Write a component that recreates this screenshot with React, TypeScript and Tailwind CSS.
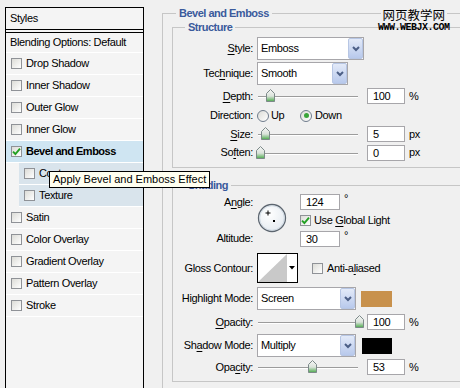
import React from "react";

const styleRows = [
  { name: "Drop Shadow" },
  { name: "Inner Shadow" },
  { name: "Outer Glow" },
  { name: "Inner Glow" },
  { name: "Bevel and Emboss", checked: true, active: true },
  { name: "Contour", sub: true },
  { name: "Texture", sub: true },
  { name: "Satin" },
  { name: "Color Overlay" },
  { name: "Gradient Overlay" },
  { name: "Pattern Overlay" },
  { name: "Stroke" },
];

function Check({ checked }: { checked?: boolean }) {
  return (
    <span className="w-[11px] h-[11px] shrink-0 border border-[#8f9297] bg-linear-to-br from-[#dcdcd7] to-white flex items-center justify-center">
      {checked && (
        <svg width="9" height="9" viewBox="0 0 9 9">
          <path d="M1 4.6 L3.4 7 L8 1.6" fill="none" stroke="#22a022" strokeWidth="1.9" />
        </svg>
      )}
    </span>
  );
}

function Radio({ on }: { on?: boolean }) {
  return (
    <span className="w-[12px] h-[12px] shrink-0 rounded-full border border-[#6f7c8c] bg-linear-to-br from-[#dcdcd7] to-white flex items-center justify-center">
      {on && <span className="w-[5px] h-[5px] rounded-full bg-[#3aa53a]" />}
    </span>
  );
}

function Select({ value, className }: { value: string; className: string }) {
  return (
    <div className={`h-[23px] shrink-0 border border-[#a7a6aa] bg-white flex items-center justify-between ${className}`}>
      <span className="pl-[3px]">{value}</span>
      <span className="w-[15px] h-[21px] border border-[#b7c6e4] rounded-[2px] bg-linear-to-b from-[#e3eaf8] to-[#b8c9ec] flex items-center justify-center">
        <svg width="8" height="6" viewBox="0 0 8 6">
          <path d="M1 1 L4 4 L7 1" fill="none" stroke="#4c5f86" strokeWidth="2" />
        </svg>
      </span>
    </div>
  );
}

function Field({ value, className = "w-[38px]" }: { value: string; className?: string }) {
  return (
    <div className={`h-[16px] shrink-0 border border-[#a7a6aa] bg-white pl-[5px] leading-[14px] ${className}`}>
      {value}
    </div>
  );
}

function Slider({ pos }: { pos: number }) {
  return (
    <div className="relative w-[100px] h-[14px] shrink-0 ml-[1px]">
      <div className="absolute left-0 right-0 top-[7px] h-[2px] border-t border-[#9c9c9c] border-b border-b-white" />
      <svg className="absolute top-0" style={{ left: pos - 4.5 }} width="9" height="13" viewBox="0 0 9 13">
        <defs>
          <linearGradient id="thumb" x1="0" y1="0" x2="0" y2="1">
            <stop offset="0" stopColor="#f6f6f6" />
            <stop offset="0.55" stopColor="#dbe3db" />
            <stop offset="1" stopColor="#4caa4c" />
          </linearGradient>
        </defs>
        <path d="M0.5 4.5 L4.5 0.5 L8.5 4.5 V12.5 H0.5 Z" fill="url(#thumb)" stroke="#7c8989" />
      </svg>
    </div>
  );
}

function Label({ children }: { children: React.ReactNode }) {
  return <div className="w-[80px] shrink-0 text-right mr-[4px]">{children}</div>;
}

const U = ({ children }: { children: React.ReactNode }) => <span className="underline underline-offset-2">{children}</span>;

export default function App() {
  return (
    <div className="relative w-[460px] h-[388px] overflow-hidden bg-[#f0f0f0] flex items-start text-[11px] leading-[13px] text-black tracking-[-0.35px] font-['Liberation_Sans',Arial,sans-serif]">
      {/* Styles list */}
      <div className="ml-[5px] mt-[7px] w-[139px] h-[400px] shrink-0 border border-black bg-[#f4f4f4]">
        <div className="h-[22px] border-b border-black flex items-center pl-[4px]">Styles</div>
        <div className="mt-[2px] h-[21px] border-t border-black border-b border-b-white flex items-center pl-[4px]">
          Blending Options: Default
        </div>
        {styleRows.map((r) => (
          <div
            key={r.name}
            className={`h-[22px] border-b border-white flex items-center gap-[4px] ${
              r.active ? "bg-[#cfe5f2] pl-[5px]" : r.sub ? "ml-[13px] bg-[#d9e4ec] pl-[5px]" : "pl-[5px]"
            } ${r.active ? "font-bold tracking-[-0.5px]" : ""}`}
          >
            <Check checked={r.checked} />
            <span>{r.name}</span>
          </div>
        ))}
      </div>

      {/* Bevel and Emboss */}
      <fieldset className="ml-[18px] mt-[6px] w-[312px] shrink-0 border border-[#c6c6c6] pb-[30px]">
        <legend className="ml-[13px] px-[3px] leading-[14px] font-bold text-[#3a5a9c] tracking-[-0.5px]">Bevel and Emboss</legend>

        <fieldset className="ml-[9px] w-[300px] border border-[#c6c6c6] pt-[2px] pb-[5px]">
          <legend className="ml-[12px] px-[3px] leading-[14px] font-bold text-[#3a5a9c] tracking-[-0.5px]">Structure</legend>
          <div className="flex items-center h-[25px]">
            <Label><U>S</U>tyle:</Label>
            <Select value="Emboss" className="w-[107px]" />
          </div>
          <div className="flex items-center h-[25px]">
            <Label>Tec<U>h</U>nique:</Label>
            <Select value="Smooth" className="w-[91px]" />
          </div>
          <div className="flex items-center h-[20px]">
            <Label><U>D</U>epth:</Label>
            <Slider pos={12} />
            <Field value="100" className="w-[38px] ml-[9px]" />
            <span className="ml-[4px]">%</span>
          </div>
          <div className="flex items-center h-[19px]">
            <Label>Direction:</Label>
            <div className="flex items-center w-[43px]">
              <Radio />
              <span className="ml-[2px]">Up</span>
            </div>
            <Radio on />
            <span className="ml-[3px]">Down</span>
          </div>
          <div className="flex items-center h-[18px]">
            <Label><U>S</U>ize:</Label>
            <Slider pos={7} />
            <Field value="5" className="w-[38px] ml-[9px]" />
            <span className="ml-[4px]">px</span>
          </div>
          <div className="flex items-center h-[19px]">
            <Label>So<U>f</U>ten:</Label>
            <Slider pos={2} />
            <Field value="0" className="w-[38px] ml-[9px]" />
            <span className="ml-[4px]">px</span>
          </div>
        </fieldset>

        <fieldset className="ml-[9px] mt-[10px] w-[300px] border border-[#c6c6c6] pb-[4px]">
          <legend className="ml-[12px] px-[3px] leading-[14px] font-bold text-[#3a5a9c] tracking-[-0.5px]">Shading</legend>
          <div className="flex h-[56px]">
            <div className="w-[80px] shrink-0 mr-[4px] flex flex-col justify-between text-right">
              <div className="h-[20px] leading-[20px]">A<U>n</U>gle:</div>
              <div className="h-[20px] leading-[20px]">Altitude:</div>
            </div>
            <svg className="mt-[11px] shrink-0" width="30" height="30" viewBox="0 0 30 30">
              <defs>
                <radialGradient id="dial" cx="0.4" cy="0.35" r="0.7">
                  <stop offset="0" stopColor="#ffffff" />
                  <stop offset="1" stopColor="#e4eaf0" />
                </radialGradient>
              </defs>
              <circle cx="15" cy="15" r="13.5" fill="url(#dial)" stroke="#5d6670" strokeWidth="1.3" />
              <circle cx="15" cy="15" r="12.3" fill="none" stroke="#c9d4de" strokeWidth="0.8" />
              <path d="M11 7.5 V12.5 M8.5 10 H13.5" stroke="#000" strokeWidth="1" />
              <rect x="16" y="17" width="2" height="2" fill="#000" />
            </svg>
            <div className="ml-[13px] flex flex-col">
              <div className="flex items-start mt-[2px]">
                <Field value="124" className="w-[40px] pl-[3px]" />
                <span className="ml-[4px] -mt-[2px]">°</span>
              </div>
              <div className="flex items-center mt-[4px] h-[12px]">
                <Check checked />
                <span className="ml-[3px]">Use <U>G</U>lobal Light</span>
              </div>
              <div className="flex items-start mt-[5px]">
                <Field value="30" className="w-[40px] pl-[3px]" />
                <span className="ml-[4px] -mt-[2px]">°</span>
              </div>
            </div>
          </div>

          <div className="flex items-center h-[30px] mt-[5px]">
            <Label>Gloss Contour:</Label>
            <div className="w-[41px] h-[30px] shrink-0 border border-black bg-white flex">
              <svg width="29" height="28" viewBox="0 0 29 28">
                <polygon points="0,28 29,0 29,28" fill="#c9c9c9" />
              </svg>
              <div className="flex-1 flex items-center justify-center">
                <svg width="6" height="4" viewBox="0 0 6 4">
                  <polygon points="0,0 6,0 3,3.5" fill="#000" />
                </svg>
              </div>
            </div>
            <div className="ml-[14px]">
              <Check />
            </div>
            <span className="ml-[4px]">Anti-a<U>l</U>iased</span>
          </div>

          <div className="flex items-center h-[23px] mt-[4px]">
            <Label>Highlight Mode:</Label>
            <Select value="Screen" className="w-[99px]" />
            <div className="ml-[5px] w-[31px] h-[16px] bg-[#c8914c]" />
          </div>
          <div className="flex items-center h-[24px]">
            <Label><U>O</U>pacity:</Label>
            <Slider pos={101} />
            <Field value="100" className="w-[38px] ml-[9px]" />
            <span className="ml-[4px]">%</span>
          </div>
          <div className="flex items-center h-[23px]">
            <Label>Sh<U>a</U>dow Mode:</Label>
            <Select value="Multiply" className="w-[99px]" />
            <div className="ml-[6px] w-[30px] h-[16px] bg-black" />
          </div>
          <div className="flex items-center h-[20px]">
            <Label>Opa<U>c</U>ity:</Label>
            <Slider pos={54} />
            <Field value="53" className="w-[38px] ml-[9px]" />
            <span className="ml-[4px]">%</span>
          </div>
        </fieldset>
      </fieldset>

      {/* tooltip */}
      <div className="absolute left-[49px] top-[171px] w-[161px] h-[17px] border border-black bg-[#fffff0] pl-[3px] leading-[15px] tracking-normal">
        Apply Bevel and Emboss Effect
      </div>

      {/* watermark */}
      <div className="absolute left-[378px] top-[7px] flex flex-col items-center">
        <div className="bg-[#f0f0f0] px-[2px] text-[12.5px] leading-[15px] tracking-normal font-['Noto_Sans_CJK_SC',sans-serif]">
          网页教学网
        </div>
        <div className="mt-[2px] text-[10px] leading-[8px] font-bold tracking-[-0.5px] font-['Liberation_Mono',monospace]">
          WWW.WEBJX.COM
        </div>
      </div>
    </div>
  );
}
